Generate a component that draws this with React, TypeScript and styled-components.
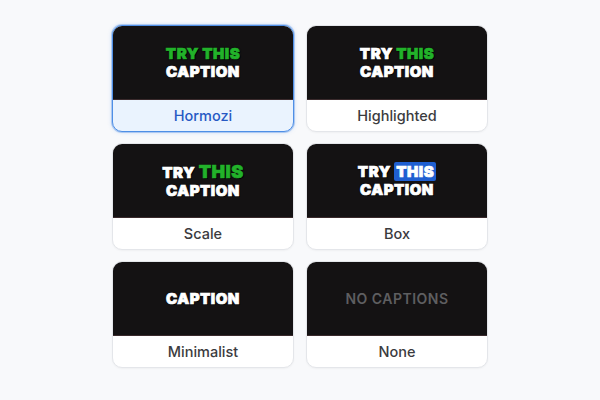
import React from 'react';
import styled, { createGlobalStyle, css } from 'styled-components';

const GlobalStyle = createGlobalStyle`
    html, body {
        margin: 0;
        padding: 0;
        background: #f8f9fb;
    }
    body {
        font-family: Inter, "Liberation Sans", sans-serif;
    }
`;

const Page = styled.div`
    width: 600px;
    height: 400px;
    display: flex;
    justify-content: center;
    padding-top: 25px;
    box-sizing: border-box;
`;

const Grid = styled.div`
    display: grid;
    grid-template-columns: 182px 182px;
    grid-auto-rows: 107px;
    column-gap: 12px;
    row-gap: 11px;
`;

const Card = styled.div<{ $active?: boolean }>`
    display: flex;
    flex-direction: column;
    border-radius: 10px;
    overflow: hidden;
    background: #fff;
    border: 1px solid #e4e6ea;
    box-shadow: 0 1px 2px rgba(0, 0, 0, 0.04);
    ${p => p.$active && css`
        border: 1.5px solid #4f8fe6;
        background: #eaf3fe;
        box-shadow: 0 0 0 1px rgba(79, 143, 230, 0.35), 0 0 4px rgba(79, 143, 230, 0.35);
    `}
`;

const Preview = styled.div`
    height: 73px;
    background: #141213;
    border-bottom: 1px solid #3a2a2c;
    display: flex;
    flex-direction: column;
    align-items: center;
    justify-content: center;
    gap: 1px;
`;

const CaptionLine = styled.div`
    font-family: Inter, "Open Sans", sans-serif;
    font-weight: 900;
    font-size: 15px;
    line-height: 17px;
    letter-spacing: 0.5px;
    color: #fff;
    -webkit-text-stroke: 0.7px currentColor;
    text-shadow: 0 0 2px #000, 1px 1px 0 #000;
    white-space: nowrap;
`;

const Word = styled.span<{ $tone?: 'green' | 'box' }>`
    ${p => p.$tone === 'green' && css`
        color: #22b22a;
    `}
    ${p => p.$tone === 'box' && css`
        background: #1f5fd1;
        padding: 0 2px;
        border-radius: 2px;
        text-shadow: none;
    `}
`;

const Empty = styled.div`
    font-family: Inter, "Liberation Sans", sans-serif;
    font-weight: 600;
    font-size: 14px;
    letter-spacing: 0.5px;
    color: #5e5e60;
`;

const Label = styled.div<{ $active?: boolean }>`
    flex: 1;
    display: flex;
    align-items: center;
    justify-content: center;
    font-size: 14.5px;
    font-weight: 500;
    color: ${p => (p.$active ? '#2759c4' : '#3b3b3e')};
`;

interface IStyle {
    name: string;
    preview: React.ReactNode;
    active?: boolean;
}

const styles: IStyle[] = [
    {
        name: 'Hormozi',
        active: true,
        preview: (
            <>
                <CaptionLine><Word $tone='green'>TRY THIS</Word></CaptionLine>
                <CaptionLine>CAPTION</CaptionLine>
            </>
        ),
    },
    {
        name: 'Highlighted',
        preview: (
            <>
                <CaptionLine>TRY <Word $tone='green'>THIS</Word></CaptionLine>
                <CaptionLine>CAPTION</CaptionLine>
            </>
        ),
    },
    {
        name: 'Scale',
        preview: (
            <>
                <CaptionLine>TRY <Word $tone='green' style={{ fontSize: '18px' }}>THIS</Word></CaptionLine>
                <CaptionLine>CAPTION</CaptionLine>
            </>
        ),
    },
    {
        name: 'Box',
        preview: (
            <>
                <CaptionLine>TRY <Word $tone='box'>THIS</Word></CaptionLine>
                <CaptionLine>CAPTION</CaptionLine>
            </>
        ),
    },
    {
        name: 'Minimalist',
        preview: <CaptionLine>CAPTION</CaptionLine>,
    },
    {
        name: 'None',
        preview: <Empty>NO CAPTIONS</Empty>,
    },
];

const App: React.FC = () => {
    return (
        <>
            <GlobalStyle />
            <Page>
                <Grid>
                    {styles.map(s => (
                        <Card key={s.name} $active={s.active}>
                            <Preview>{s.preview}</Preview>
                            <Label $active={s.active}>{s.name}</Label>
                        </Card>
                    ))}
                </Grid>
            </Page>
        </>
    );
};

export default App;
